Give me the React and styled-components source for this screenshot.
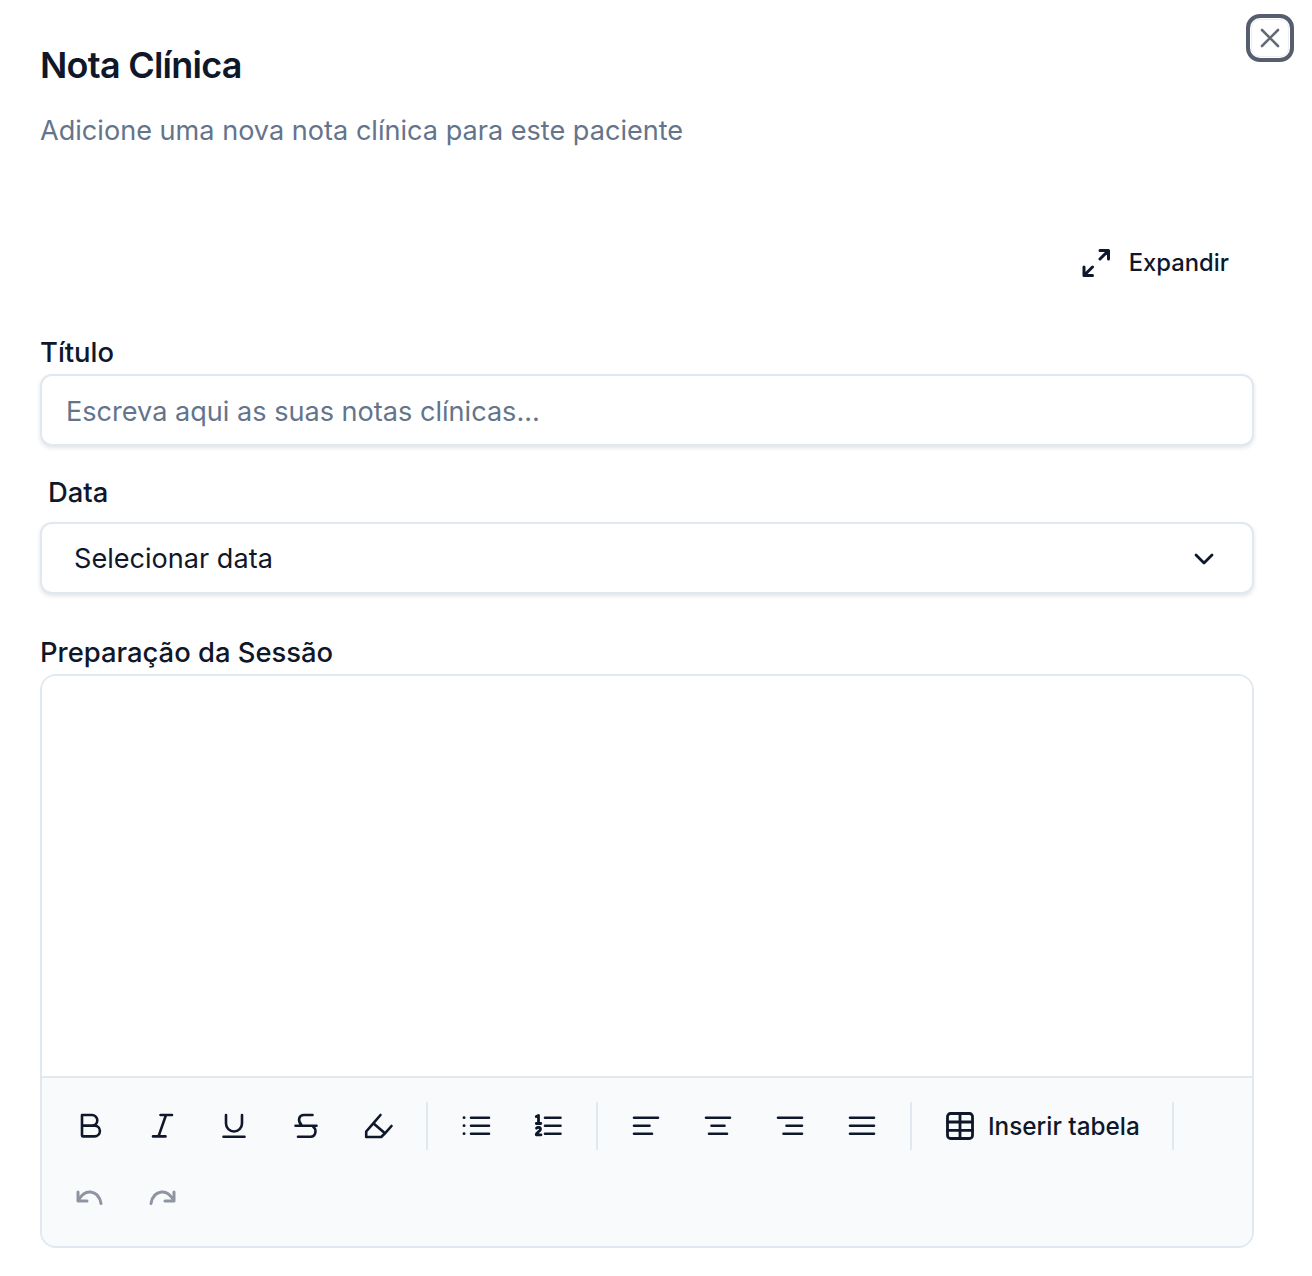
import React from 'react';
import styled, { createGlobalStyle } from 'styled-components';

const GlobalStyle = createGlobalStyle`
  html, body { margin: 0; padding: 0; background: #fff; }
  body { font-family: Inter, "Noto Sans", "Liberation Sans", sans-serif; color: #0f172a; }
  * { box-sizing: border-box; }
`;

const Dialog = styled.div`
  position: relative;
  width: 1312px;
  height: 1276px;
  padding: 41px 58px 0 40px;
`;

const CloseButton = styled.button`
  position: absolute;
  top: 14px;
  left: 1246px;
  width: 48px;
  height: 48px;
  padding: 0;
  display: flex;
  align-items: center;
  justify-content: center;
  background: #fff;
  border: 4px solid #565e6d;
  border-radius: 14px;
  color: #646b78;
  box-shadow: inset 0 0 0 1px #fff, inset 0 0 0 2px #eceef1;
`;

const Title = styled.h2`
  margin: 0;
  font-size: 36px;
  line-height: 48px;
  font-weight: 600;
  letter-spacing: -0.75px;
  color: #0f172a;
`;

const Description = styled.p`
  margin: 18px 0 0;
  font-size: 27.1px;
  line-height: 48px;
  color: #64748b;
`;

const ExpandRow = styled.div`
  display: flex;
  justify-content: flex-end;
  margin: 84px 0 0;
  padding-right: 25px;
`;

const ExpandButton = styled.button`
  display: flex;
  align-items: center;
  gap: 19px;
  height: 48px;
  padding: 0;
  border: 0;
  background: none;
  font: 500 23.8px/32px Inter, sans-serif;
  color: #0f172a;
`;

const Label = styled.label`
  display: block;
  font-size: 27.4px;
  line-height: 40px;
  font-weight: 500;
  color: #0f172a;
  margin-top: ${p => p.$top}px;
  padding-left: ${p => p.$indent || 0}px;
`;

const Input = styled.div`
  height: 72px;
  margin-top: ${p => (p.$select ? 10 : 2)}px;
  border: 2px solid #e2e8f0;
  border-radius: 12px;
  background: #fff;
  box-shadow: 0 2px 4px rgba(15, 23, 42, 0.12);
  display: flex;
  align-items: center;
  justify-content: space-between;
  font-size: 27.1px;
  padding: ${p => (p.$select ? '1px 34px 0 32px' : '2px 24px 0')};
  color: ${p => (p.$select ? '#0f172a' : '#64748b')};
`;

const Editor = styled.div`
  margin-top: 2px;
  height: 574px;
  border: 2px solid #e2e8f0;
  border-radius: 16px;
  display: flex;
  flex-direction: column;
  overflow: hidden;
`;

const EditorBody = styled.div`
  flex: 1;
  background: #fff;
`;

const Toolbar = styled.div`
  border-top: 2px solid #e2e8f0;
  background: #f8fafc;
  padding: 24px;
  display: flex;
  flex-wrap: wrap;
  gap: 24px;
`;

const ToolButton = styled.button`
  width: 48px;
  height: 48px;
  padding: 0;
  border: 0;
  background: none;
  display: flex;
  align-items: center;
  justify-content: center;
  color: ${p => (p.disabled ? '#8e94a0' : '#0f172a')};
`;

const TableButton = styled.button`
  height: 48px;
  padding: 0 8px;
  border: 0;
  background: none;
  display: flex;
  align-items: center;
  gap: 12px;
  font: 500 24.3px/32px Inter, sans-serif;
  color: #0f172a;
`;

const Divider = styled.div`
  width: 2px;
  height: 48px;
  background: #e2e8f0;
`;

const Icon = ({ children, stroke = 2.6 }) => (
  <svg width="32" height="32" viewBox="0 0 32 32" fill="none" stroke="currentColor" strokeWidth={stroke} strokeLinecap="round" strokeLinejoin="round">
    {children}
  </svg>
);

const Bold = () => <Icon><path d="M8 5h10a5.300 5.300 0 0 1 0 10.600H8V5ZM8 15.600h12.500a5.400 5.400 0 0 1 0 10.800H9a1 1 0 0 1-1-1V15.600Z" /></Icon>;
const Italic = () => <Icon><path d="M14.500 5H26M7 26.400h12.500M20 5l-7.500 21.400" /></Icon>;
const Underline = () => <Icon><path d="M8 5v8.500a8 8 0 0 0 16 0V5M5.500 26.700h21" /></Icon>;
const Strike = () => <Icon><path d="M22.500 5H14c-5.500 0-6.500 6-2.500 10M5.500 15.700h21M23 16.500c4 3 3 10-2.500 10.200H8" /></Icon>;
const Highlight = () => <Icon><path d="M18.500 5l-7.200 8.300L4.200 21.500v5.500h15l3.800-3.700 6.500-7.300M11.300 13.300 23 23.300" /></Icon>;
const BulletList = () => (
  <Icon>
    <path d="M11 7.700h18M11 15.700h18M11 23.700h18" />
    <path d="M4 7.700h.1M4 15.700h.1M4 23.700h.1" strokeWidth="2.800" />
  </Icon>
);
const OrderedList = () => (
  <Icon>
    <path d="M13 7.700h15.500M13 15.700h15.500M13 23.700h15.500" />
    <path d="M4.300 6.600 6.500 5.500v7.500M4.300 13.500h4.500M4.500 18.200c1-1.200 4-1 4 1 0 2.200-4 2.800-4.200 5.600h4.700" strokeWidth="2.800" />
  </Icon>
);
const Lines = ({ d }) => <Icon><path d={d} /></Icon>;
const TableIcon = () => <Icon stroke={2.8}><rect x="3.500" y="3.500" width="25" height="25" rx="3" /><path d="M3.500 12h25M3.500 20.300h25M16 3.500v25" /></Icon>;
const Undo = () => <Icon stroke={3}><path d="M4 10v9h9M4.500 18C8 12 12 9.500 16.500 10c6 .6 9.500 5.500 10.500 11.500" /></Icon>;
const Redo = () => <Icon stroke={3}><path d="M28 10v9h-9M27.500 18C24 12 20 9.500 15.500 10 9.500 10.600 6 15.500 5 21.500" /></Icon>;

const textButtons = [Bold, Italic, Underline, Strike, Highlight];
const alignPaths = [
  'M4 7.700h24M4 15.700h15.500M4 23.700h18',
  'M4 7.700h24M9.500 15.700h13M7 23.700h18',
  'M4 7.700h24M12.500 15.700h15.500M9.500 23.700h18.500',
  'M4 7.700h24M4 15.700h24M4 23.700h24',
];

export default function App() {
  return (
    <Dialog>
      <GlobalStyle />
      <CloseButton aria-label="Fechar">
        <svg width="26" height="26" viewBox="0 0 26 26" fill="none" stroke="currentColor" strokeWidth="2.600" strokeLinecap="round">
          <path d="M5 5l16 16M21 5 5 21" />
        </svg>
      </CloseButton>
      <Title>Nota Clínica</Title>
      <Description>Adicione uma nova nota clínica para este paciente</Description>

      <ExpandRow>
        <ExpandButton>
          <svg width="28" height="28" viewBox="0 0 28 28" fill="none" stroke="currentColor" strokeWidth="3" strokeLinecap="round" strokeLinejoin="round">
            <path d="M18 1.500h8.500V10M26 2l-8 8M2 18v8.500h8.500M2.500 26l8-8" />
          </svg>
          Expandir
        </ExpandButton>
      </ExpandRow>

      <Label $top={45}>Título</Label>
      <Input>Escreva aqui as suas notas clínicas...</Input>

      <Label $top={26} $indent={8}>Data</Label>
      <Input $select>
        Selecionar data
        <svg width="28" height="28" viewBox="0 0 28 28" fill="none" stroke="currentColor" strokeWidth="2.800" strokeLinecap="round" strokeLinejoin="round">
          <path d="M6 10l8 8 8-8" />
        </svg>
      </Input>

      <Label $top={38}>Preparação da Sessão</Label>
      <Editor>
        <EditorBody />
        <Toolbar>
          {textButtons.map((Glyph, i) => (
            <ToolButton key={i}><Glyph /></ToolButton>
          ))}
          <Divider />
          <ToolButton><BulletList /></ToolButton>
          <ToolButton><OrderedList /></ToolButton>
          <Divider />
          {alignPaths.map((d, i) => (
            <ToolButton key={i}><Lines d={d} /></ToolButton>
          ))}
          <Divider />
          <TableButton><TableIcon />Inserir tabela</TableButton>
          <Divider />
          <ToolButton disabled><Undo /></ToolButton>
          <ToolButton disabled><Redo /></ToolButton>
        </Toolbar>
      </Editor>
    </Dialog>
  );
}
